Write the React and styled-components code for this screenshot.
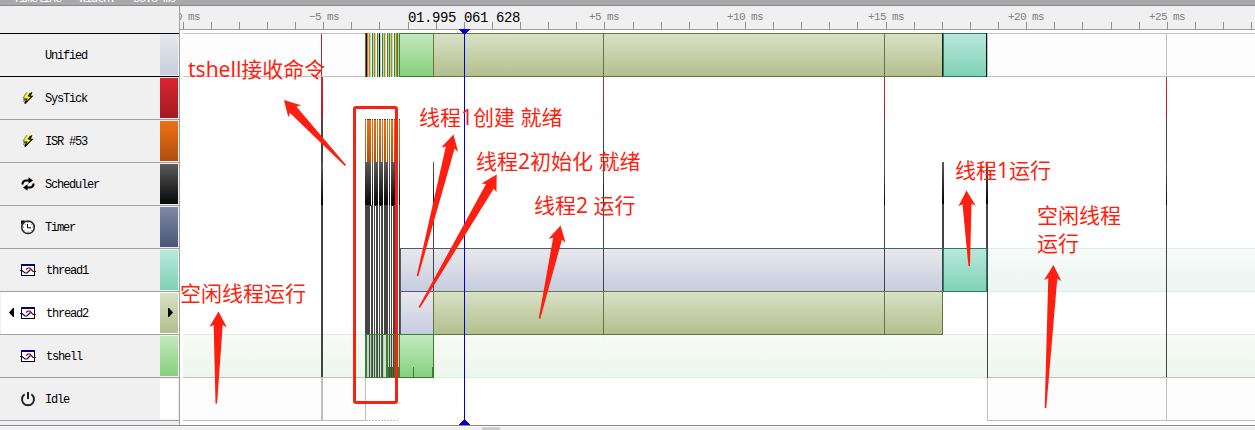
import React from "react";
import styled, { createGlobalStyle } from "styled-components";

const GlobalStyle = createGlobalStyle`
  * { box-sizing: border-box; }
  body { margin: 0; background: #fff; }
`;

const mono = `"Liberation Mono", monospace`;

const Window = styled.div`
  display: flex;
  flex-direction: column;
  width: 1255px;
  height: 430px;
  overflow: hidden;
  background: #f0f0f0;
  font-family: ${mono};
`;

const StatusBar = styled.header`
  display: flex;
  gap: 18px;
  height: 6px;
  padding-left: 13px;
  overflow: hidden;
  background: #a9a9a9;
  border-bottom: 1px solid #8a8496;
  color: #fff;
  font-size: 12px;
  letter-spacing: -1.2px;
  line-height: 14px;
  white-space: pre;
`;

const StatusItem = styled.span`
  height: 14px;
  margin-top: -8px;
`;

const Main = styled.main`
  display: flex;
  height: 419px;
`;

const Sidebar = styled.aside`
  display: flex;
  flex-direction: column;
  width: 180px;
  border-right: 1px solid #a0a0a0;
  background: #f0f0f0;
`;

const SidebarHead = styled.div`
  height: 28px;
  border-bottom: 1px solid #000;
`;

const ContextRow = styled.div`
  display: flex;
  align-items: center;
  height: 43px;
  padding-left: 1px;
  border-bottom: 1px solid ${(p) => (p.$strong ? "#000" : "#a0a0a0")};
  background: ${(p) => (p.$selected ? "linear-gradient(90deg, #f0f0f0 1px, #fff 1px)" : "#f0f0f0")};
`;

const Marker = styled.span`
  display: flex;
  width: 19px;
  padding: 0 0 1px 8px;
`;

const IconSlot = styled.span`
  display: flex;
  width: 25px;
  svg { display: block; }
`;

const ContextName = styled.span`
  flex: 1;
  padding: 2px 0 0 ${(p) => (p.$indent ? 1 : 0)}px;
  color: #000;
  font-size: 12px;
  letter-spacing: -1.2px;
  line-height: 14px;
`;

const Swatch = styled.span`
  display: flex;
  align-items: center;
  justify-content: center;
  width: 18px;
  height: 40px;
  margin-right: 1px;
  padding: 0 0 1px 2px;
  background: linear-gradient(${(p) => p.$from}, ${(p) => p.$to});
`;

const TimelinePane = styled.section`
  position: relative;
  display: flex;
  flex-direction: column;
  width: 1075px;
  background: #fff;
`;

const Ruler = styled.div`
  height: 24px;
  background: #f0f0f0;
  border-bottom: 1px solid #a0a0a0;
  svg { display: block; }
`;

const Plot = styled.div`
  height: 395px;
  svg { display: block; }
`;

const Overlay = styled.svg`
  position: absolute;
  left: 0;
  top: 0;
`;

const Note = styled.div`
  position: absolute;
  left: ${(p) => p.$x - 180}px;
  top: ${(p) => p.$y - 7}px;
  color: #ff1f10;
  font-family: "Noto Sans", "Noto Sans CJK SC", sans-serif;
  font-size: 21px;
  font-weight: 400;
  line-height: 28px;
  white-space: pre;
`;

const ScrollTrack = styled.footer`
  height: 5px;
  padding: 1px 0 0 482px;
  border-top: 1px solid #8a8496;
  background: #f0f0f0;
  box-shadow: inset 0 1px #fff;
`;

const ScrollThumb = styled.div`
  width: 18px;
  height: 3px;
  background: #cdcdcd;
`;

const BoltIcon = () => (
  <svg width="16" height="16" viewBox="0 0 16 16">
    <path d="M7 2L3.500 7.500h2L3.500 12" fill="none" stroke="#8c8c8c" strokeWidth="1.200" />
    <path d="M8 2h4L9.500 6h2.500L5 14l1.800-5H3.500z" fill="#ff0" />
    <path d="M12 2.300L9.800 6.200h2.400L5 13.700M3.300 9h3.500L4.600 13.500M8 6.500L10.500 3" fill="none" stroke="#000" strokeWidth="1.100" />
  </svg>
);

const SwitchIcon = () => (
  <svg width="16" height="16" viewBox="0 0 16 16">
    <path d="M2.500 8.500C2.500 5.500 4 4.500 6.500 4.500H9M13.500 7.500c0 3-1.500 4-4 4H7" fill="none" stroke="#000" strokeWidth="2.200" />
    <path d="M8.500 1.200l4.500 3.300-4.500 3.300zM7.500 8.200L3 11.500l4.500 3.300z" fill="#000" />
  </svg>
);

const ClockIcon = () => (
  <svg width="16" height="16" viewBox="0 0 16 16">
    <circle cx="8" cy="8.300" r="6.300" fill="#fff" stroke="#222" strokeWidth="1.500" />
    <path d="M1 1.500h4L1 5.500z" fill="#000" />
    <path d="M7.500 5v3.800H11" fill="none" stroke="#000" />
    <path d="M8 3v1M8 12.500v1M3 8h1M12.500 8h1M4.800 5l.6.6M11 5l.5.5M4.800 11.500l.6-.6M11 11l.5.500" stroke="#555" />
  </svg>
);

const ThreadIcon = () => (
  <svg width="16" height="14" viewBox="0 0 16 14" shapeRendering="crispEdges">
    <rect x="1.500" y="1.500" width="13" height="11" fill="#fff" stroke="#000" />
    <rect x="1" y="1" width="14" height="2" fill="#000080" />
    <g fill="none" shapeRendering="auto" strokeWidth="1.200">
      <path d="M0 7.500h2l3 2.500h2l3.500-3.500" stroke="#000080" />
      <path d="M6 6.500L8 5h2l3 3.500h3" stroke="#800000" />
    </g>
  </svg>
);

const PowerIcon = () => (
  <svg width="16" height="16" viewBox="0 0 16 16">
    <path d="M4.700 3.300a6 6 0 1 0 6.600 0" fill="none" stroke="#222" strokeWidth="1.900" />
    <path d="M8 1v7" stroke="#222" strokeWidth="2" />
  </svg>
);

const Caret = ({ right }) => (
  <svg width="5" height="9" viewBox="0 0 5 9">
    <path d={right ? "M0 0h1l4 4.500-4 4.500H0z" : "M5 0H4L0 4.500 4 9h1z"} fill="#000" />
  </svg>
);

const contexts = [
  { name: "Unified", from: "#e8e8ec", to: "#c6cddf", strong: true },
  { name: "SysTick", icon: BoltIcon, from: "#d9252f", to: "#a31a23" },
  { name: "ISR #53", icon: BoltIcon, from: "#f07014", to: "#b04f0d" },
  { name: "Scheduler", icon: SwitchIcon, from: "#5a5a5a", to: "#080808" },
  { name: "Timer", icon: ClockIcon, from: "#7d89a5", to: "#4a5678" },
  { name: "thread1", icon: ThreadIcon, from: "#b6e9db", to: "#7fd1b5", indent: true },
  { name: "thread2", icon: ThreadIcon, from: "#d8e0c6", to: "#b2bf8c", indent: true, selected: true },
  { name: "tshell", icon: ThreadIcon, from: "#c3e8be", to: "#86d07d", indent: true },
  { name: "Idle", icon: PowerIcon, from: "#fff", to: "#fff" },
];

const rulerLabels = [
  { x: 176, text: "0 ms" },
  { x: 309, text: "−5 ms" },
  { x: 589, text: "+5 ms" },
  { x: 727, text: "+10 ms" },
  { x: 868, text: "+15 ms" },
  { x: 1008, text: "+20 ms" },
  { x: 1149, text: "+25 ms" },
];

const fills = {
  green: ["#c4e9bf", "#86d07d", "#37802f"],
  olive: ["#d9e1c7", "#b2bf8c", "#66753c"],
  teal: ["#b8e9dc", "#7fd1b5", "#2b7d62"],
  lilac: ["#e9e8ec", "#c6ccdf", "#4a5a80"],
  paleTeal: ["#f5fbf9", "#ecf6f2", "#e0ebe7"],
  paleGreen: ["#f6fbf5", "#ecf7ec", "#dfeae2"],
  idle: ["#fdfdfd", "#fdfdfd", "#c0c0c0"],
  isr: ["#f07014", "#b04f0d", "#7a3609"],
  black: ["#5a5a5a", "#050505", "#111"],
  systick: ["#d02733", "#b01e29", "#b01e29"],
};

const laneTop = (n) => 33 + 43 * n;

const Bar = ({ lane, from, to, kind }) => (
  <rect x={from + 0.5} y={laneTop(lane) + 0.5} width={to - from} height="43"
    fill={`url(#${kind})`} stroke={fills[kind][2]} />
);

const Band = ({ lane, from, to, kind }) => (
  <g>
    <rect x={from} y={laneTop(lane)} width={to - from} height="44" fill={`url(#${kind})`} />
    <rect x={from} y={laneTop(lane)} width={to - from} height="1" fill={fills[kind][2]} />
    <rect x={from} y={laneTop(lane + 1)} width={to - from} height="1" fill={fills[kind][2]} />
  </g>
);

const Line = ({ x, w = 1, from, to, color }) => (
  <rect x={x} y={from} width={w} height={to - from} fill={color} />
);

const G = "#37802f", L = "#b4dfb0", O = "#e0701c", K = "#111", W = "#fff", S = "#c8c8c8";
const unifiedStripes = [G, K, O, L, O, L, W, G, L, O, L, W, G, L, K, S, W, G, L, O, L, W, G, L, G, L, O, L, W, G, L, O, G, L, G];
const isrStripes = [[365, 1], [367, 4], [372, 1], [374, 2], [377, 1], [379, 2], [382, 1], [384, 2], [387, 1], [389, 1], [391, 2], [394, 1], [396, 2], [399, 1]];
const schedStripes = [[365, 6], [372, 1], [374, 4], [379, 4], [384, 4], [389, 1], [391, 4], [396, 2], [399, 1]];
const waitStripes = [[365, 5], [371, 2], [374, 1], [376, 2], [379, 1], [381, 2], [384, 4], [389, 1], [391, 1], [393, 2], [396, 1], [399, 1]];
const shellStripes = [[365, 2, G], [367, 2, "#cbd0d8"], [369, 1, "#444"], [370, 1, L], [371, 1, G], [372, 1, "#444"], [373, 1, "#cbd0d8"], [374, 1, "#444"], [375, 1, L], [376, 1, G], [377, 1, "#444"], [378, 1, "#d5d5e0"], [379, 1, "#444"], [380, 1, "#e0e0e6"], [381, 1, G], [382, 1, "#444"], [383, 1, L], [384, 2, "#d2dfd2"], [386, 2, G], [388, 1, L], [389, 1, "#444"], [390, 1, L], [391, 1, "#444"], [392, 1, "#d8d8df"], [393, 1, "#444"], [394, 1, G], [395, 4, L]];

const tickLines = [{ x: 321, w: 2 }, { x: 603, w: 1 }, { x: 884, w: 1 }, { x: 1166, w: 1 }];

const arrows = [
  [284, 100, 345.5, 165.5],
  [453.5, 134.5, 417.5, 276],
  [496.7, 174.5, 419.3, 307.5],
  [560.5, 225.5, 539.5, 318.5],
  [966.5, 190.5, 969.2, 266],
  [218.5, 311.5, 216.3, 403.5],
  [1053.5, 265, 1045.5, 408],
];

const Arrow = ({ at: [tx, ty, bx, by] }) => {
  const len = Math.hypot(bx - tx, by - ty);
  const ux = (bx - tx) / len, uy = (by - ty) / len;
  const pts = [[0, 0], [15.5, 8.7], [13.5, 4.5], [len, 0.8], [len, -0.8], [13.5, -4.5], [15.5, -8.7]]
    .map(([d, s]) => `${tx + ux * d - uy * s},${ty + uy * d + ux * s}`);
  return <polygon points={pts.join(" ")} fill="#ff1f10" />;
};

const notes = [
  { x: 188, y: 56, text: "tshell接收命令" },
  { x: 419, y: 104, text: "线程1创建 就绪" },
  { x: 476, y: 148, text: "线程2初始化 就绪" },
  { x: 534, y: 192, text: "线程2 运行" },
  { x: 955, y: 157, text: "线程1运行" },
  { x: 1037, y: 202, text: "空闲线程\n运行" },
  { x: 180, y: 280, text: "空闲线程运行" },
];

const ticks = Array.from({ length: 39 }, (_, i) => Math.floor(464.3 + (i - 10) * 28.12));

function TimeRuler() {
  return (
    <Ruler>
      <svg width="1075" height="23" viewBox="180 6 1075 23">
        {ticks.map((x) => <rect key={x} x={x} y="22" width="1" height="7" fill="#909090" />)}
        <g fontFamily="Liberation Mono" fontSize="11" letterSpacing="-0.6" fill="#808080">
          {rulerLabels.map((l) => <text key={l.text} x={l.x} y="20">{l.text}</text>)}
        </g>
        <rect x="407" y="9" width="115" height="13" fill="#f0f0f0" />
        <text x="408" y="22" fontFamily="Liberation Mono" fontSize="14" letterSpacing="-0.4" fill="#000" xmlSpace="preserve">01.995 061 628</text>
      </svg>
    </Ruler>
  );
}

function TimelinePlot() {
  return (
    <Plot>
      <svg width="1075" height="395" viewBox="180 30 1075 395" shapeRendering="crispEdges">
        <defs>
          {Object.entries(fills).map(([id, [a, b]]) => (
            <linearGradient key={id} id={id} x1="0" y1="0" x2="0" y2="1">
              <stop offset="0" stopColor={a} />
              <stop offset="1" stopColor={b} />
            </linearGradient>
          ))}
        </defs>

        <Band lane={5} from={988} to={1255} kind="paleTeal" />
        <Band lane={7} from={183} to={1255} kind="paleGreen" />
        <Band lane={0} from={183} to={365} kind="idle" />
        <Band lane={0} from={988} to={1255} kind="idle" />
        <Band lane={8} from={183} to={366} kind="idle" />
        <Band lane={8} from={987} to={1255} kind="idle" />
        <Line x={365} from={377} to={421} color="#c0c0c0" />
        <path d="M366 420.5h32" stroke="#c0c0c0" strokeDasharray="2 1" />

        {tickLines.map(({ x, w }) => (
          <g key={x}>
            <Line x={x} from={34} to={76} w={1} color={x === 1166 ? "#c0c0c0" : "#b52532"} />
            <Line x={x} w={w} from={77} to={119} color="url(#systick)" />
            <Line x={x} w={w} from={119} to={377} color="#444" />
            <Line x={x} w={w} from={163} to={205} color="url(#black)" />
            {(x === 321 || x === 1166) && <Line x={x} w={w} from={377} to={420} color="#c0c0c0" />}
          </g>
        ))}

        <Bar lane={0} from={399} to={433} kind="green" />
        <Bar lane={0} from={433} to={603} kind="olive" />
        <Bar lane={0} from={603} to={884} kind="olive" />
        <Bar lane={0} from={884} to={942} kind="olive" />
        <Bar lane={0} from={943} to={986} kind="teal" />
        <Line x={942} from={33} to={77} color="#222" />
        <Line x={986} from={33} to={77} color="#111" />
        <Line x={987} from={33} to={77} color="#c0c0c0" />
        {unifiedStripes.map((c, i) => <Line key={i} x={365 + i} from={33} to={77} color={c} />)}

        {isrStripes.map(([x, w]) => <Line key={x} x={x} w={w} from={119} to={162} color="url(#isr)" />)}
        {isrStripes.map(([x, w]) => <Line key={x} x={x} w={w} from={119} to={120} color="#6b3310" />)}
        {schedStripes.map(([x, w]) => <Line key={x} x={x} w={w} from={162} to={206} color="url(#black)" />)}
        {waitStripes.map(([x, w]) => <Line key={x} x={x} w={w} from={205} to={334} color="#444" />)}

        <Bar lane={5} from={400} to={942} kind="lilac" />
        <Bar lane={6} from={400} to={433} kind="lilac" />
        <Bar lane={6} from={433} to={603} kind="olive" />
        <Bar lane={6} from={603} to={884} kind="olive" />
        <Bar lane={6} from={884} to={942} kind="olive" />
        <Bar lane={5} from={943} to={986} kind="teal" />
        <Line x={603} from={248} to={291} color="#444" />
        <Line x={884} from={248} to={291} color="#444" />
        <Line x={433} from={162} to={205} color="url(#black)" />
        <Line x={433} from={205} to={291} color="#444" />
        <Line x={942} w={2} from={162} to={204} color="url(#black)" />
        <Line x={942} w={2} from={204} to={248} color="#444" />
        <Line x={942} from={248} to={291} color="#444" />
        <Line x={986} w={2} from={162} to={204} color="url(#black)" />
        <Line x={986} w={2} from={204} to={248} color="#444" />
        <Line x={987} from={248} to={378} color="#444" />
        <Line x={987} from={378} to={420} color="#c0c0c0" />
        <rect x="603" y="335" width="1" height="42" fill="#f1f9f0" />
        <rect x="884" y="335" width="1" height="42" fill="#f1f9f0" />

        <Bar lane={7} from={399} to={433} kind="green" />
        {shellStripes.map(([x, w, c]) => <Line key={x} x={x} w={w} from={335} to={377} color={c} />)}
        <Line x={386} w={13} from={367} to={377} color="#37802f" />
        {[389, 391, 393, 396].map((x) => <Line key={x} x={x} from={335} to={377} color="#444" />)}
        <rect x="365" y="334" width="35" height="1" fill="#37802f" />
        <rect x="365" y="377" width="35" height="1" fill="#37802f" />
        <Line x={413} from={367} to={377} color="#37802f" />
        <Line x={432} from={367} to={377} color="#37802f" />
      </svg>
    </Plot>
  );
}

export default function App() {
  return (
    <Window>
      <GlobalStyle />
      <StatusBar>
        <StatusItem>Timeline</StatusItem>
        <StatusItem>Width:</StatusItem>
        <StatusItem>38.8 ms</StatusItem>
      </StatusBar>
      <Main>
        <Sidebar>
          <SidebarHead />
          {contexts.map(({ name, icon: Icon, from, to, strong, selected, indent }) => (
            <ContextRow key={name} $strong={strong} $selected={selected}>
              <Marker>{selected && <Caret />}</Marker>
              <IconSlot>{Icon && <Icon />}</IconSlot>
              <ContextName $indent={indent}>{name}</ContextName>
              <Swatch $from={from} $to={to}>{selected && <Caret right />}</Swatch>
            </ContextRow>
          ))}
        </Sidebar>
        <TimelinePane>
          <TimeRuler />
          <TimelinePlot />
          <Overlay width="1075" height="419" viewBox="180 6 1075 419">
            <g fill="#0000d0" shapeRendering="crispEdges">
              <rect x="464" y="29" width="1" height="396" />
              <path d="M459 29h11v1h-1v1h-1v1h-1v1h-1v1h-3v-1h-1v-1h-1v-1h-1v-1h-1z" />
              <path d="M459 425h11v-1h-1v-1h-1v-1h-1v-1h-1v-1h-3v1h-1v1h-1v1h-1v1h-1z" />
            </g>
            <rect x="354.500" y="107.500" width="42" height="295" rx="1.500" fill="none" stroke="#ff1f10" strokeWidth="3" />
            {arrows.map((a) => <Arrow key={a[0]} at={a} />)}
          </Overlay>
          {notes.map((n) => <Note key={n.text} $x={n.x} $y={n.y}>{n.text}</Note>)}
        </TimelinePane>
      </Main>
      <ScrollTrack><ScrollThumb /></ScrollTrack>
    </Window>
  );
}
